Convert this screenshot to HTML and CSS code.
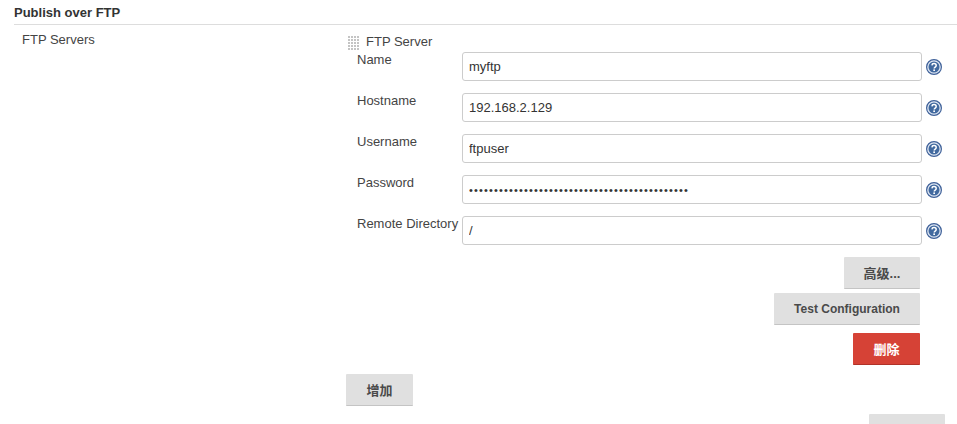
FILE: index.html
```html
<!DOCTYPE html>
<html lang="zh">
<head>
    <meta charset="UTF-8">
    <title>Publish over FTP</title>
    <link rel="stylesheet" href="styles.css">
</head>
<body>
    <h2 class="section-title">Publish over FTP</h2>

    <div class="config-row">
        <div class="config-label">FTP Servers</div>
        <div class="config-body">
            <div class="server-head">
                <span class="drag-handle"></span>
                <span>FTP Server</span>
            </div>

            <!-- 服务器字段 -->
            <div class="field">
                <label>Name</label>
                <input type="text" value="myftp">
                <svg class="help" viewBox="0 0 16 16"><use href="#help-icon"/></svg>
            </div>
            <div class="field">
                <label>Hostname</label>
                <input type="text" value="192.168.2.129">
                <svg class="help" viewBox="0 0 16 16"><use href="#help-icon"/></svg>
            </div>
            <div class="field">
                <label>Username</label>
                <input type="text" value="ftpuser">
                <svg class="help" viewBox="0 0 16 16"><use href="#help-icon"/></svg>
            </div>
            <div class="field">
                <label>Password</label>
                <input class="secret" type="password" value="12345678901234567890123456789012345678901234">
                <svg class="help" viewBox="0 0 16 16"><use href="#help-icon"/></svg>
            </div>
            <div class="field">
                <label>Remote Directory</label>
                <input type="text" value="/">
                <svg class="help" viewBox="0 0 16 16"><use href="#help-icon"/></svg>
            </div>

            <!-- 操作按钮 -->
            <div class="actions">
                <button class="btn btn-advanced">高级...</button>
                <button class="btn btn-test">Test Configuration</button>
                <button class="btn btn-danger">删除</button>
            </div>
            <button class="btn btn-add">增加</button>
            <div class="next-row">
                <button class="btn btn-next"></button>
            </div>
        </div>
    </div>

    <svg class="icon-defs" width="0" height="0">
        <symbol id="help-icon" viewBox="0 0 16 16">
            <circle cx="8" cy="8" r="7.4" fill="#dfe7f3" stroke="#3f6199" stroke-width="1.2"/>
            <circle cx="8" cy="8" r="5.5" fill="#41699f"/>
            <path d="M5.9 6.4C6 5.2 6.9 4.6 8 4.6c1.3 0 2.2.8 2.2 1.9 0 1.6-2 1.6-2 3.1" fill="none" stroke="#fff" stroke-width="1.5"/>
            <rect x="7.3" y="10.4" width="1.7" height="1.6" fill="#fff"/>
        </symbol>
    </svg>
</body>
</html>
```

FILE: styles.css
```css
body {
    margin: 0;
    background-color: #fff;
    color: #444;
    font-family: "Liberation Sans", "Noto Sans CJK SC", sans-serif;
    font-size: 13px;
    overflow: hidden;
}
.section-title {
    margin: 0 0 0 14px;
    height: 24px;
    line-height: 26px;
    font-size: 13px;
    font-weight: bold;
    color: #333;
    border-bottom: 1px solid #ddd;
}
.config-row {
    display: flex;
    padding-left: 22px;
}
.config-label {
    width: 324px;
    padding-top: 7px;
    line-height: 16px;
    flex-shrink: 0;
}
.config-body {
    width: 599px;
}
.server-head {
    display: flex;
    align-items: center;
    gap: 7px;
    height: 16px;
    margin-top: 9px;
    padding-left: 1px;
    line-height: 16px;
}
.drag-handle {
    width: 12px;
    height: 15px;
    background-color: #c4c4c4;
    background-image: linear-gradient(90deg, #fff 1px, transparent 1px), linear-gradient(#fff 1px, transparent 1px);
    background-size: 3px 3px;
}
.field {
    display: flex;
    height: 29px;
    margin-bottom: 12px;
    padding-left: 11px;
}
.server-head + .field {
    margin-top: 2px;
}
.field label {
    width: 105px;
    flex-shrink: 0;
    line-height: 15px;
}
.field input {
    width: 460px;
    height: 29px;
    box-sizing: border-box;
    padding: 0 6px;
    border: 1px solid #ccc;
    border-radius: 3px;
    color: #333;
    font-family: inherit;
    font-size: 13px;
}
.field .secret {
    font-size: 11px;
    letter-spacing: 1.15px;
}
.help {
    width: 16px;
    height: 16px;
    margin: 7px 0 0 4px;
    flex-shrink: 0;
}
.actions {
    display: flex;
    flex-direction: column;
    align-items: flex-end;
    width: 574px;
}
.btn {
    display: block;
    height: 32px;
    box-sizing: border-box;
    border: none;
    border-bottom: 1px solid #c4c4c4;
    border-radius: 1px;
    background-color: #e0e0e0;
    color: #4a4a4a;
    font-family: inherit;
    font-size: 13px;
    font-weight: bold;
    padding: 0;
}
.btn-advanced {
    width: 76px;
}
.btn-test {
    width: 146px;
    margin-top: 4px;
    font-size: 12px;
}
.btn-danger {
    width: 67px;
    margin-top: 8px;
    background-color: #d64236;
    border-bottom-color: #b03228;
    color: #fff;
}
.btn-add {
    width: 67px;
    margin-top: 9px;
}
.next-row {
    display: flex;
    justify-content: flex-end;
    height: 10px;
    margin-top: 8px;
    overflow: hidden;
}
.btn-next {
    width: 76px;
}
.icon-defs {
    position: absolute;
}
```
